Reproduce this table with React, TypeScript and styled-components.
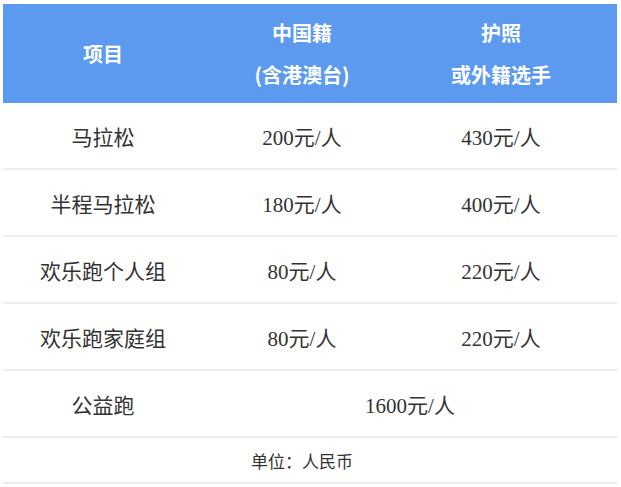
import React from 'react';
import styled, { createGlobalStyle } from 'styled-components';

const GlobalStyle = createGlobalStyle`
  html, body {
    margin: 0;
    padding: 0;
    background: #ffffff;
  }
`;

const Page = styled.div`
  padding: 4px 3px;
  width: 614px;
  font-family: "Liberation Serif", "Noto Sans CJK SC", serif;
  color: #333333;
`;

const Table = styled.div`
  display: grid;
  grid-template-columns: 200px 198px 1fr;
  width: 614px;
`;

const HeadCell = styled.div<{ last?: boolean }>`
  background: #5c9af0;
  height: 99px;
  display: flex;
  flex-direction: column;
  align-items: center;
  justify-content: center;
  gap: 19px;
  padding-right: ${p => (p.last ? '16px' : '0')};
  font-family: "Noto Sans CJK SC", "Noto Sans", sans-serif;
  font-weight: 700;
  font-size: 20px;
  line-height: 23px;
  color: #ffffff;
`;

const Cell = styled.div<{ span?: number; padRight?: boolean }>`
  grid-column: span ${p => p.span ?? 1};
  height: 67px;
  box-sizing: border-box;
  border-bottom: 2px solid #ededed;
  display: flex;
  align-items: center;
  justify-content: center;
  padding-right: ${p => (p.padRight ? '16px' : '0')};
  font-size: 21px;
`;

const Footer = styled.div`
  grid-column: 1 / -1;
  height: 46px;
  box-sizing: border-box;
  border-bottom: 2px solid #ededed;
  display: flex;
  align-items: center;
  justify-content: center;
  padding-right: 16px;
  font-family: "Noto Sans CJK SC", sans-serif;
  font-size: 17px;
  color: #333333;
`;

const rows = [
  { name: '马拉松', cn: '200元/人', intl: '430元/人' },
  { name: '半程马拉松', cn: '180元/人', intl: '400元/人' },
  { name: '欢乐跑个人组', cn: '80元/人', intl: '220元/人' },
  { name: '欢乐跑家庭组', cn: '80元/人', intl: '220元/人' },
];

export default function App() {
  return (
    <Page>
      <GlobalStyle />
      <Table>
        <HeadCell>
          <span>项目</span>
        </HeadCell>
        <HeadCell>
          <span>中国籍</span>
          <span>(含港澳台)</span>
        </HeadCell>
        <HeadCell last>
          <span>护照</span>
          <span>或外籍选手</span>
        </HeadCell>

        {rows.map(r => (
          <React.Fragment key={r.name}>
            <Cell>{r.name}</Cell>
            <Cell>{r.cn}</Cell>
            <Cell padRight>{r.intl}</Cell>
          </React.Fragment>
        ))}

        <Cell>公益跑</Cell>
        <Cell span={2}>1600元/人</Cell>

        <Footer>单位：人民币</Footer>
      </Table>
    </Page>
  );
}
